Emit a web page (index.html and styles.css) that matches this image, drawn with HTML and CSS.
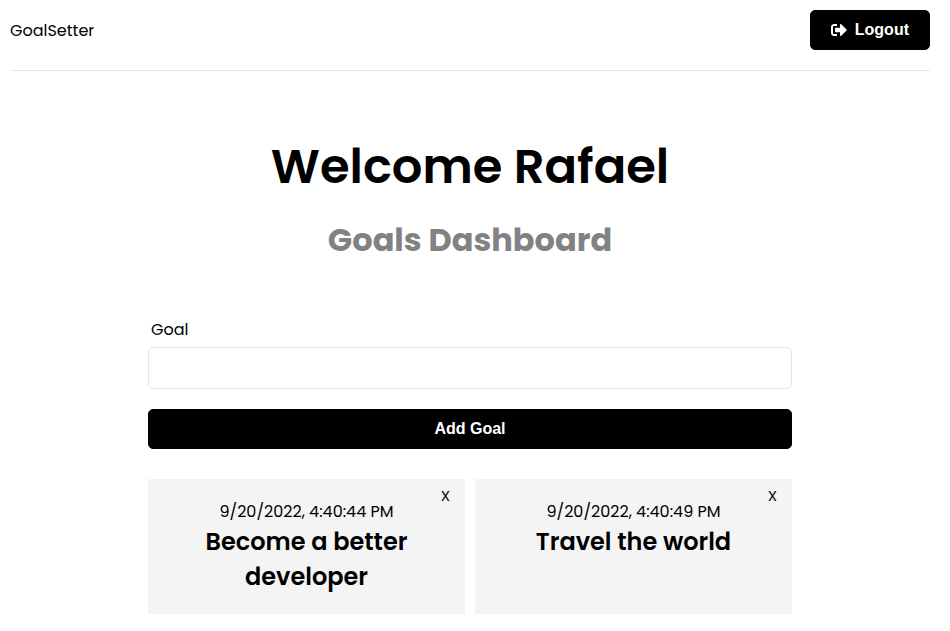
FILE: index.html
```html
<!DOCTYPE html>
<html lang="en">
<head>
<meta charset="utf-8">
<title>GoalSetter</title>
<link rel="stylesheet" href="styles.css">
</head>
<body>
<div class="container">
  <header class="header">
    <a class="logo">GoalSetter</a>
    <button class="btn"><svg class="icon" viewBox="0 0 512 512" aria-hidden="true"><path fill="currentColor" d="M497 273L329 441c-15 15-41 4.500-41-17v-96H152c-13.300 0-24-10.700-24-24v-96c0-13.300 10.700-24 24-24h136V88c0-21.400 25.900-32 41-17l168 168c9.300 9.400 9.300 24.600 0 34zM192 436v-40c0-6.600-5.400-12-12-12H96c-17.700 0-32-14.300-32-32V160c0-17.700 14.300-32 32-32h84c6.600 0 12-5.400 12-12V76c0-6.600-5.400-12-12-12H96c-53 0-96 43-96 96v192c0 53 43 96 96 96h84c6.600 0 12-5.400 12-12z"/></svg>Logout</button>
  </header>
  <section class="heading">
    <h1>Welcome Rafael</h1>
    <p>Goals Dashboard</p>
  </section>
  <section class="form">
    <label for="goal">Goal</label>
    <input id="goal" type="text">
    <button class="btn btn-block">Add Goal</button>
  </section>
  <section class="goals">
    <article class="goal">
      <div class="date">9/20/2022, 4:40:44 PM</div>
      <h2>Become a better developer</h2>
      <button class="close">X</button>
    </article>
    <article class="goal">
      <div class="date">9/20/2022, 4:40:49 PM</div>
      <h2>Travel the world</h2>
      <button class="close">X</button>
    </article>
  </section>
</div>
</body>
</html>
```
FILE: styles.css
```css
* { box-sizing: border-box; margin: 0; padding: 0; }
body { font-family: Poppins, Inter, sans-serif; color: #000; background: #fff; overflow: hidden; }
.container { width: 920px; margin: 0 10px; text-align: center; }
.header { display: flex; justify-content: space-between; align-items: center; height: 71px; padding: 10px 0 20px; border-bottom: 1px solid #e6e6e6; margin-bottom: 60px; }
.logo { font-size: 16px; }
.btn { display: flex; align-items: center; justify-content: center; height: 40px; padding: 0 20px; border: 1px solid #000; border-radius: 5px; background: #000; color: #fff; font: 700 16px "Liberation Sans", sans-serif; }
.icon { width: 16px; height: 16px; margin-right: 8px; }
.heading { height: 188px; }
.heading h1 { font-size: 48px; font-weight: 600; line-height: 72px; }
.heading p { font-size: 32px; font-weight: 700; line-height: 48px; color: #828282; margin-top: 13px; }
.form { width: 644px; margin: 0 auto 30px; text-align: left; }
.form label { display: block; margin: 0 0 6px 3px; font-size: 16px; line-height: 22px; }
.form input { display: block; width: 100%; height: 42px; border: 1px solid #e6e6e6; border-radius: 5px; margin-bottom: 20px; }
.btn-block { width: 100%; }
.goals { width: 644px; margin: 0 auto; display: grid; grid-template-columns: 1fr 1fr; gap: 10px; }
.goal { position: relative; height: 135px; padding: 21px 20px 0; background: #f4f4f4; }
.date { font-size: 16px; line-height: 24px; }
.goal h2 { padding: 0 30px; font-size: 24px; font-weight: 600; line-height: 35px; }
.close { position: absolute; top: 10px; right: 15px; border: 0; background: none; font: 15px/14px Poppins, Inter, sans-serif; }
```
